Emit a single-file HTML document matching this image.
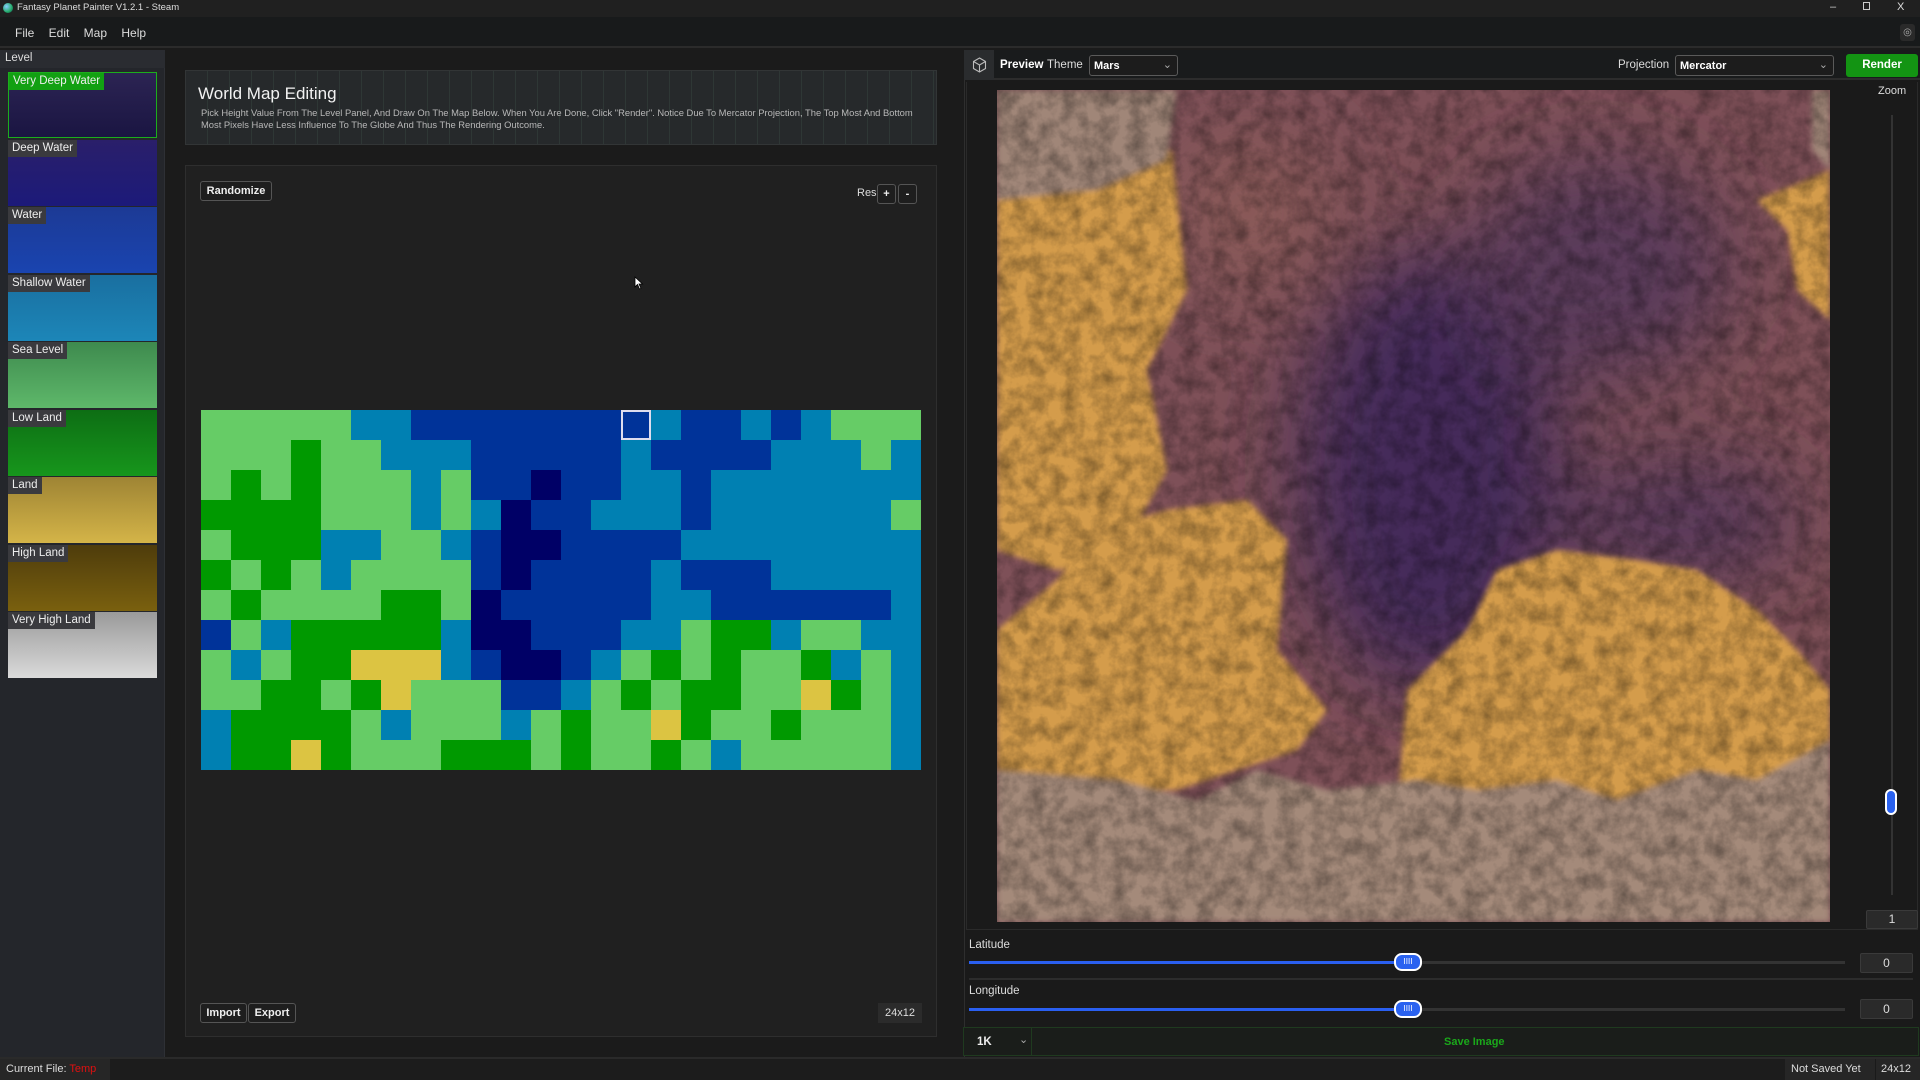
<!DOCTYPE html>
<html><head><meta charset="utf-8"><style>
*{box-sizing:border-box;margin:0;padding:0}
body{width:1920px;height:1080px;background:#1b1b1b;font-family:"Liberation Sans",sans-serif;color:#ddd;position:relative;overflow:hidden;font-size:12px}
.a{position:absolute}
.btn{position:absolute;border:1px solid #555;border-radius:3px;background:#1e1e1e;color:#eee;font-weight:bold;font-size:11px;text-align:center;line-height:18px}
.tile{position:absolute;left:8px;width:149px;height:66px}
.lab{position:absolute;left:0;top:0;background:#3a3a3e;color:#eee;font-size:11.5px;padding:2px 4px 3px 4px}
.box{position:absolute;background:#2a2a2a;border:1px solid #3a3a3a;border-radius:2px;text-align:center;color:#ddd;font-size:12px}
</style></head><body>
<div class="a" style="left:0;top:0;width:1920px;height:17px;background:#202020"></div>
<div class="a" style="left:3px;top:3px;width:10px;height:10px;border-radius:50%;background:radial-gradient(circle at 35% 35%,#8cf,#2a6 60%,#135)"></div>
<div class="a" style="left:17px;top:2px;font-size:9.5px;color:#ddd">Fantasy Planet Painter V1.2.1 - Steam</div>
<div class="a" style="left:1830px;top:1px;font-size:11px;color:#ccc">–</div>
<div class="a" style="left:1863px;top:2px;width:7px;height:8px;border:1px solid #ccc"></div>
<div class="a" style="left:1897px;top:1px;font-size:11px;color:#ddd">X</div>
<div class="a" style="left:0;top:17px;width:1920px;height:31px;background:#181a1b;border-bottom:2px solid #2b2b2b"></div>
<div class="a" style="left:15px;top:26px;font-size:12px;color:#ddd;word-spacing:11px">File Edit Map Help</div>
<div class="a" style="left:1900px;top:24px;width:15px;height:17px;background:#2a2a2a;border-radius:3px;color:#aaa;font-size:10px;text-align:center;line-height:17px">◎</div>
<div class="a" style="left:0;top:50px;width:165px;height:1007px;background:#24262b;border-right:1px solid #2e3035"></div>
<div class="a" style="left:0;top:50px;width:165px;height:18px;background:#2a2c31"></div>
<div class="a" style="left:5px;top:52px;font-size:11.5px;color:#ddd">Level</div>
<div class="tile" style="top:72px;background:linear-gradient(#2c2453,#1a1542);border:1px solid #1cae1c"><div class="lab" style="background:#12a012">Very Deep Water</div></div>
<div class="tile" style="top:140px;background:linear-gradient(#2a1f6a,#1c1a7a)"><div class="lab">Deep Water</div></div>
<div class="tile" style="top:207px;background:linear-gradient(#1c3a95,#1a44b0)"><div class="lab">Water</div></div>
<div class="tile" style="top:275px;background:linear-gradient(#1a6fa0,#1c86b8)"><div class="lab">Shallow Water</div></div>
<div class="tile" style="top:342px;background:linear-gradient(#3e8a4e,#5eb86a)"><div class="lab">Sea Level</div></div>
<div class="tile" style="top:410px;background:linear-gradient(#0d6e14,#17961c)"><div class="lab">Low Land</div></div>
<div class="tile" style="top:477px;background:linear-gradient(#9e8434,#d4b448)"><div class="lab">Land</div></div>
<div class="tile" style="top:545px;background:linear-gradient(#4e3c0c,#7a600e)"><div class="lab">High Land</div></div>
<div class="tile" style="top:612px;background:linear-gradient(#9a9a9a,#dadada)"><div class="lab">Very High Land</div></div>
<div class="a" style="left:185px;top:70px;width:752px;height:75px;background:#26292b;border:1px solid #323536;background-image:repeating-linear-gradient(90deg,transparent 0 21px,rgba(80,120,100,.18) 21px 22px)"></div>
<div class="a" style="left:198px;top:84px;font-size:17px;color:#f2f2f2">World Map Editing</div>
<div class="a" style="left:201px;top:107px;font-size:9.4px;color:#b8b8b8;line-height:12px;width:720px">Pick Height Value From The Level Panel, And Draw On The Map Below. When You Are Done, Click "Render". Notice Due To Mercator Projection, The Top Most And Bottom Most Pixels Have Less Influence To The Globe And Thus The Rendering Outcome.</div>
<div class="a" style="left:185px;top:165px;width:752px;height:872px;background:#202020;border:1px solid #2e2e2e"></div>
<div class="btn" style="left:200px;top:181px;width:72px;height:20px">Randomize</div>
<div class="a" style="left:857px;top:187px;font-size:11px;color:#ddd">Res</div>
<div class="btn" style="left:877px;top:184px;width:19px;height:20px">+</div>
<div class="btn" style="left:898px;top:184px;width:19px;height:20px">-</div>
<svg class="a" style="left:634px;top:276px" width="10" height="14" viewBox="0 0 10 14"><path d="M1 1 L1 11 L3.5 8.5 L5.5 13 L7 12.3 L5 8 L8.5 8 Z" fill="#fff" stroke="#000" stroke-width=".8"/></svg>
<div class="a" id="grid" style="left:201px;top:410px;width:720px;height:360px;display:grid;grid-template-columns:repeat(24,30px);grid-template-rows:repeat(12,30px)"></div>
<div class="a" style="left:621px;top:410px;width:30px;height:30px;border:2px solid #dde"></div>
<div class="btn" style="left:200px;top:1003px;width:47px;height:20px">Import</div>
<div class="btn" style="left:248px;top:1003px;width:48px;height:20px">Export</div>
<div class="a" style="left:878px;top:1003px;width:44px;height:20px;background:#2b2b2b;font-size:11px;text-align:center;line-height:20px;color:#ddd">24x12</div>
<div class="a" style="left:964px;top:50px;width:956px;height:1007px;background:#1a1a1a;border-left:1px solid #2e2e2e"></div>
<div class="a" style="left:964px;top:50px;width:956px;height:30px;background:#191b1c;border-bottom:2px solid #2c2c2c"></div>
<div class="a" style="left:964px;top:50px;width:30px;height:30px;background:#2a2c2e"></div>
<svg class="a" style="left:972px;top:57px" width="15" height="16" viewBox="0 0 15 16"><path d="M7.5 1 L13.5 4.5 L13.5 11.5 L7.5 15 L1.5 11.5 L1.5 4.5 Z M1.5 4.5 L7.5 8 L13.5 4.5 M7.5 8 L7.5 15" fill="none" stroke="#bbb" stroke-width="1.1"/></svg>
<div class="a" style="left:1000px;top:59px;font-size:11.5px;font-weight:bold;color:#fff">Preview</div>
<div class="a" style="left:1047px;top:59px;font-size:11.5px;color:#ddd">Theme</div>
<div class="a" style="left:1089px;top:55px;width:89px;height:21px;border:1px solid #5a5a5a;border-radius:3px;background:#1c1c1c;font-size:11px;font-weight:bold;color:#fff;padding:4px 4px">Mars<span style="position:absolute;right:5px;top:2px;color:#aaa;font-weight:normal">⌄</span></div>
<div class="a" style="left:1618px;top:59px;font-size:11.5px;color:#ddd">Projection</div>
<div class="a" style="left:1675px;top:55px;width:159px;height:21px;border:1px solid #5a5a5a;border-radius:3px;background:#1c1c1c;font-size:11px;font-weight:bold;color:#fff;padding:4px 4px">Mercator<span style="position:absolute;right:5px;top:2px;color:#aaa;font-weight:normal">⌄</span></div>
<div class="a" style="left:1846px;top:54px;width:72px;height:23px;border-radius:3px;background:#139413;font-size:11.5px;font-weight:bold;color:#fff;text-align:center;line-height:23px">Render</div>
<div class="a" style="left:966px;top:82px;width:952px;height:848px;border:1px solid #2a2a2a;border-top:none"></div>
<div class="a" style="left:997px;top:90px;width:833px;height:832px;overflow:hidden;background:#7a4c58">
<svg width="833" height="832" viewBox="0 0 833 832">
<defs>
<filter id="b1"><feGaussianBlur stdDeviation="40"/></filter>
<filter id="b2"><feGaussianBlur stdDeviation="3"/></filter>
<filter id="n"><feTurbulence type="fractalNoise" baseFrequency=".06" numOctaves="4" seed="4"/><feColorMatrix values="0 0 0 0 0  0 0 0 0 0  0 0 0 0 0  0 0 0 -1.8 1.2"/></filter>
</defs>
<rect width="833" height="832" fill="#7e5058"/>
<g filter="url(#b1)">
<ellipse cx="430" cy="380" rx="130" ry="220" fill="#44295a"/>
<ellipse cx="600" cy="180" rx="130" ry="110" fill="#5a3a5a"/>
<ellipse cx="680" cy="430" rx="120" ry="60" fill="#56375a"/>
<ellipse cx="250" cy="120" rx="80" ry="80" fill="#8a5a58"/>
</g>
<g filter="url(#b2)">
<path d="M0 90 L175 60 L190 200 L150 280 L170 380 L120 470 L60 480 L0 460Z" fill="#d49c4c"/>
<path d="M0 540 L60 490 L100 440 L170 420 L250 410 L290 450 L280 560 L330 620 L300 660 L180 700 L0 700Z" fill="#d49c4c"/>
<path d="M410 600 L470 540 L500 480 L560 460 L640 470 L700 480 L760 520 L800 560 L833 600 L833 720 L400 720Z" fill="#d49c4c"/>
<path d="M760 110 L810 90 L833 80 L833 230 L800 200 L790 140Z" fill="#d49c4c"/>
<path d="M0 0 L180 0 L170 70 L100 100 L0 110Z" fill="#a08678"/>
<path d="M0 680 L120 690 L200 710 L260 680 L330 700 L420 690 L480 700 L560 690 L620 710 L700 680 L760 690 L833 650 L833 832 L0 832Z" fill="#a48a7a"/>
<path d="M815 0 L833 0 L833 80 L815 60Z" fill="#a08678"/>
</g>
<rect width="833" height="832" fill="#000" opacity=".35" filter="url(#n)"/>
</svg></div>
<div class="a" style="left:1878px;top:85px;font-size:11px;color:#ddd">Zoom</div>
<div class="a" style="left:1891px;top:115px;width:2px;height:780px;background:#333"></div>
<div class="a" style="left:1885px;top:789px;width:12px;height:26px;border-radius:6px;background:#2a62f0;border:2px solid #fff"></div>
<div class="box" style="left:1866px;top:910px;width:52px;height:19px;line-height:17px">1</div>
<div class="a" style="left:969px;top:939px;font-size:11.5px;color:#ddd">Latitude</div>
<div class="a" style="left:969px;top:961px;width:876px;height:3px;background:#333"></div>
<div class="a" style="left:969px;top:961px;width:434px;height:3px;background:#2a5ff0"></div>
<div class="a" style="left:1394px;top:953px;width:28px;height:18px;border-radius:8px;background:#2a62f0;border:2px solid #fff;color:#fff;font-size:8px;text-align:center;line-height:13px">IIII</div>
<div class="box" style="left:1860px;top:953px;width:53px;height:20px;line-height:18px">0</div>
<div class="a" style="left:969px;top:978px;width:944px;height:2px;background:#2c2c2c"></div>
<div class="a" style="left:969px;top:985px;font-size:11.5px;color:#ddd">Longitude</div>
<div class="a" style="left:969px;top:1008px;width:876px;height:3px;background:#333"></div>
<div class="a" style="left:969px;top:1008px;width:434px;height:3px;background:#2a5ff0"></div>
<div class="a" style="left:1394px;top:1000px;width:28px;height:18px;border-radius:8px;background:#2a62f0;border:2px solid #fff;color:#fff;font-size:8px;text-align:center;line-height:13px">IIII</div>
<div class="box" style="left:1860px;top:999px;width:53px;height:20px;line-height:18px">0</div>
<div class="a" style="left:963px;top:1027px;width:956px;height:29px;background:#1a1d1a;border:1px solid #1f3a1f"></div>
<div class="a" style="left:1031px;top:1028px;width:1px;height:27px;background:#1f3a1f"></div>
<div class="a" style="left:977px;top:1036px;font-size:11.5px;font-weight:bold;color:#eee">1K</div>
<div class="a" style="left:1019px;top:1033px;font-size:11px;color:#aaa">⌄</div>
<div class="a" style="left:1444px;top:1036px;font-size:11px;font-weight:bold;color:#1aa81a">Save Image</div>
<div class="a" style="left:0;top:1057px;width:1920px;height:23px;background:#1c1c1c;border-top:2px solid #2a2a2a"></div>
<div class="a" style="left:0;top:1059px;width:110px;height:21px;background:#262626"></div>
<div class="a" style="left:6px;top:1063px;font-size:11px;color:#ddd">Current File: <span style="color:#e01010">Temp</span></div>
<div class="a" style="left:1785px;top:1059px;width:135px;height:21px;background:#262626"></div>
<div class="a" style="left:1875px;top:1059px;width:1px;height:21px;background:#1a1a1a"></div>
<div class="a" style="left:1791px;top:1063px;font-size:11px;color:#ddd">Not Saved Yet</div>
<div class="a" style="left:1881px;top:1063px;font-size:11px;color:#ddd">24x12</div>
<script>
var rows=["LLLLLCCBBBBBBBBCBBCBCLLL","LLLGLLCCCBBBBBCBBBBCCCLC","LGLGLLLCLBBNBBCCBCCCCCCC","GGGGLLLCLCNBBCCCBCCCCCCL","LGGGCCLLCBNNBBBBCCCCCCCC","GLGLCLLLLBNBBBBCBBBCCCCC","LGLLLLGGLNBBBBBCCBBBBBBC","BLCGGGGGCNNBBBCCLGGCLLCC","LCLGGYYYCBNNBCLGLGLLGCLC","LLGGLGYLLLBBCLGLGGLLYGLC","CGGGGLCLLLCLGLLYGLLGLLLC","CGGYGLLLGGGLGLLGLCLLLLLC"];
var col={L:"#66cc66",G:"#009900",C:"#0080b2",B:"#003399",N:"#000066",Y:"#dcc442"};
var g=document.getElementById("grid"),h="";
rows.forEach(function(r){for(var i=0;i<24;i++)h+='<div style="background:'+col[r[i]]+'"></div>';});
g.innerHTML=h;
</script>
</body></html>
